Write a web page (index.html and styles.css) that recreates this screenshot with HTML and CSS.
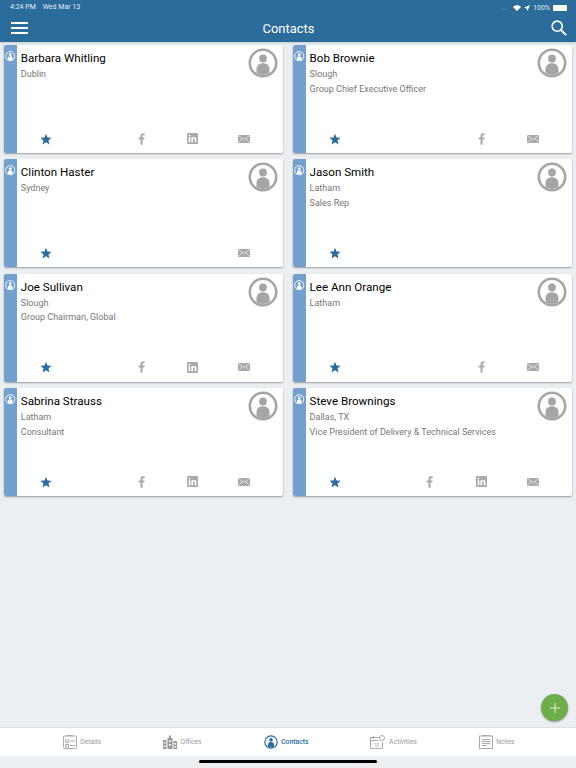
FILE: index.html
```html
<!DOCTYPE html>
<html lang="en">

<head>
    <meta charset="UTF-8">
    <meta name="viewport" content="width=device-width, initial-scale=1.0">
    <title>Contacts</title>
    <link rel="stylesheet" href="styles.css">
</head>

<body>
    <svg class="defs" width="0" height="0">
        <symbol id="person" viewBox="0 0 30 30">
            <circle cx="15" cy="15" r="13.2" fill="none" stroke="currentColor" stroke-width="2.6" />
            <circle cx="15" cy="10.500" r="3.900" fill="currentColor" />
            <path d="M8.500 25v-4c0-3.600 2.600-5.800 6.500-5.800s6.500 2.200 6.500 5.800v4c-2 1.300-4.200 2-6.500 2s-4.500-.7-6.500-2z" fill="currentColor" />
        </symbol>
        <symbol id="star" viewBox="0 0 24 24">
            <path d="M12 1.500l3 7.600 8.200.5-6.300 5.200 2.100 8-7-4.400-7 4.400 2.100-8L.8 9.600 9 9.100z" fill="currentColor" />
        </symbol>
        <symbol id="fb" viewBox="0 0 12 20">
            <path d="M7.800 20v-9h3l.5-3.500H7.800V5.400c0-1 .3-1.700 1.700-1.700h1.900V.5C11 .4 10 .3 8.900.3 6.200.3 4.300 2 4.300 5v2.500H1.200V11h3.100v9z" fill="currentColor" />
        </symbol>
        <symbol id="linkedin" viewBox="0 0 20 20">
            <path fill-rule="evenodd" d="M1.500 0h17c.8 0 1.500.7 1.500 1.500v17c0 .8-.7 1.500-1.500 1.500h-17C.7 20 0 19.300 0 18.500v-17C0 .7.700 0 1.500 0zM3 7.600V17h3V7.600zM4.500 3a1.700 1.700 0 1 0 0 3.400 1.700 1.700 0 0 0 0-3.400zM8 7.600V17h3v-5c0-1.400.6-2.200 1.700-2.200s1.400.8 1.400 2.200v5h3v-5.700c0-2.600-1.300-3.900-3.300-3.900-1.300 0-2.200.6-2.800 1.500V7.600z" fill="currentColor" />
        </symbol>
        <symbol id="mail" viewBox="0 0 24 16">
            <rect width="24" height="16" rx="1" fill="currentColor" />
            <path d="M1 1.500l11 7.500 11-7.500M1 14.500l7.500-7M23 14.500l-7.500-7" fill="none" stroke="#fff" stroke-width="1.200" />
        </symbol>
    </svg>

    <header class="topbar">
        <div class="statusbar">
            <span class="status-left"><span>4:24 PM</span><span>Wed Mar 13</span></span>
            <span class="status-right">
                <span class="dots">....</span>
                <svg width="8" height="6" viewBox="0 0 22 16">
                    <path d="M11 16L0 5c6-6.500 16-6.500 22 0z" fill="#fff" />
                </svg>
                <svg width="6" height="6" viewBox="0 0 16 16">
                    <path d="M16 0L0 7l7 2 2 7z" fill="#fff" />
                </svg>
                <span>100%</span>
                <span class="battery"></span>
            </span>
        </div>
        <div class="navbar">
            <div class="menu-btn"><span></span><span></span><span></span></div>
            <h1>Contacts</h1>
            <svg class="search-btn" width="16" height="16" viewBox="0 0 18 18">
                <circle cx="7" cy="7" r="5.700" fill="none" stroke="#fff" stroke-width="1.800" />
                <path d="M11.200 11.200L17 17" stroke="#fff" stroke-width="2.200" />
            </svg>
        </div>
    </header>

    <main class="contacts">
        <div class="card">
            <div class="strip"><svg class="strip-icon"><use href="#person" /></svg></div>
            <div class="card-body">
                <div class="name">Barbara Whitling</div>
                <div class="detail">Dublin</div>
                <svg class="avatar"><use href="#person" /></svg>
                <div class="actions">
                    <svg class="star"><use href="#star" /></svg>
                    <div class="slot"><svg class="ic-fb"><use href="#fb" /></svg></div>
                    <div class="slot"><svg class="ic-in"><use href="#linkedin" /></svg></div>
                    <div class="slot"><svg class="ic-mail"><use href="#mail" /></svg></div>
                </div>
            </div>
        </div>

        <div class="card">
            <div class="strip"><svg class="strip-icon"><use href="#person" /></svg></div>
            <div class="card-body">
                <div class="name">Bob Brownie</div>
                <div class="detail">Slough</div>
                <div class="detail">Group Chief Executive Officer</div>
                <svg class="avatar"><use href="#person" /></svg>
                <div class="actions">
                    <svg class="star"><use href="#star" /></svg>
                    <div class="slot"><svg class="ic-fb"><use href="#fb" /></svg></div>
                    <div class="slot"><svg class="ic-mail"><use href="#mail" /></svg></div>
                </div>
            </div>
        </div>

        <div class="card">
            <div class="strip"><svg class="strip-icon"><use href="#person" /></svg></div>
            <div class="card-body">
                <div class="name">Clinton Haster</div>
                <div class="detail">Sydney</div>
                <svg class="avatar"><use href="#person" /></svg>
                <div class="actions">
                    <svg class="star"><use href="#star" /></svg>
                    <div class="slot"><svg class="ic-mail"><use href="#mail" /></svg></div>
                </div>
            </div>
        </div>

        <div class="card">
            <div class="strip"><svg class="strip-icon"><use href="#person" /></svg></div>
            <div class="card-body">
                <div class="name">Jason Smith</div>
                <div class="detail">Latham</div>
                <div class="detail">Sales Rep</div>
                <svg class="avatar"><use href="#person" /></svg>
                <div class="actions">
                    <svg class="star"><use href="#star" /></svg>
                </div>
            </div>
        </div>

        <div class="card">
            <div class="strip"><svg class="strip-icon"><use href="#person" /></svg></div>
            <div class="card-body">
                <div class="name">Joe Sullivan</div>
                <div class="detail">Slough</div>
                <div class="detail">Group Chairman, Global</div>
                <svg class="avatar"><use href="#person" /></svg>
                <div class="actions">
                    <svg class="star"><use href="#star" /></svg>
                    <div class="slot"><svg class="ic-fb"><use href="#fb" /></svg></div>
                    <div class="slot"><svg class="ic-in"><use href="#linkedin" /></svg></div>
                    <div class="slot"><svg class="ic-mail"><use href="#mail" /></svg></div>
                </div>
            </div>
        </div>

        <div class="card">
            <div class="strip"><svg class="strip-icon"><use href="#person" /></svg></div>
            <div class="card-body">
                <div class="name">Lee Ann Orange</div>
                <div class="detail">Latham</div>
                <svg class="avatar"><use href="#person" /></svg>
                <div class="actions">
                    <svg class="star"><use href="#star" /></svg>
                    <div class="slot"><svg class="ic-fb"><use href="#fb" /></svg></div>
                    <div class="slot"><svg class="ic-mail"><use href="#mail" /></svg></div>
                </div>
            </div>
        </div>

        <div class="card">
            <div class="strip"><svg class="strip-icon"><use href="#person" /></svg></div>
            <div class="card-body">
                <div class="name">Sabrina Strauss</div>
                <div class="detail">Latham</div>
                <div class="detail">Consultant</div>
                <svg class="avatar"><use href="#person" /></svg>
                <div class="actions">
                    <svg class="star"><use href="#star" /></svg>
                    <div class="slot"><svg class="ic-fb"><use href="#fb" /></svg></div>
                    <div class="slot"><svg class="ic-in"><use href="#linkedin" /></svg></div>
                    <div class="slot"><svg class="ic-mail"><use href="#mail" /></svg></div>
                </div>
            </div>
        </div>

        <div class="card">
            <div class="strip"><svg class="strip-icon"><use href="#person" /></svg></div>
            <div class="card-body">
                <div class="name">Steve Brownings</div>
                <div class="detail">Dallas, TX</div>
                <div class="detail">Vice President of Delivery &amp; Technical Services</div>
                <svg class="avatar"><use href="#person" /></svg>
                <div class="actions">
                    <svg class="star"><use href="#star" /></svg>
                    <div class="slot"><svg class="ic-fb"><use href="#fb" /></svg></div>
                    <div class="slot"><svg class="ic-in"><use href="#linkedin" /></svg></div>
                    <div class="slot"><svg class="ic-mail"><use href="#mail" /></svg></div>
                </div>
            </div>
        </div>
    </main>

    <button class="fab">
        <svg width="10" height="10" viewBox="0 0 10 10">
            <path d="M5 0v10M0 5h10" stroke="#e6f2de" stroke-width="1" />
        </svg>
    </button>

    <nav class="tabbar">
        <div class="tab">
            <svg width="14" height="14" viewBox="0 0 14 14" fill="none" stroke="#aaa">
                <rect x=".5" y="1" width="13" height="12.500" rx="1" />
                <path d="M4 .5h6M2.500 5h3v2.500h-3zM2.500 9.500h3V12h-3zM7 6h5M7 10.500h5" />
            </svg>
            <span>Details</span>
        </div>
        <div class="tab">
            <svg width="14" height="14" viewBox="0 0 14 14" fill="#999">
                <path d="M0 5h3.500V14H0zM4.500 3H6V.500h2V3h1.500V14h-5zM10.500 6H14v8h-3.500z" />
                <path d="M1 7h1.500v1.500H1zM1 10.500h1.500V12H1zM6 5.500h2V7H6zM6 9h2v1.500H6zM11.500 8H13v1.500h-1.500zM11.500 11H13v1.500h-1.500z" fill="#fff" />
            </svg>
            <span>Offices</span>
        </div>
        <div class="tab active">
            <svg width="14" height="14" viewBox="0 0 30 30"><use href="#person" /></svg>
            <span>Contacts</span>
        </div>
        <div class="tab">
            <svg width="15" height="14" viewBox="0 0 15 14" fill="none" stroke="#aaa">
                <path d="M9 2.500H.5v11h12V7M.5 5.500h8M3.500 1v3" />
                <circle cx="12" cy="3" r="2.500" />
                <text x="3.500" y="11.500" class="cal-num">10</text>
            </svg>
            <span>Activities</span>
        </div>
        <div class="tab">
            <svg width="14" height="14" viewBox="0 0 14 14" fill="none" stroke="#aaa">
                <rect x=".5" y="1" width="13" height="12.500" />
                <path d="M3 .5h8M3 4.500h8M3 6.500h8M3 8.500h8M3 10.500h5" />
            </svg>
            <span>Notes</span>
        </div>
    </nav>

    <div class="home-area"><div class="home-bar"></div></div>
</body>

</html>
```

FILE: styles.css
```css
* {
    box-sizing: border-box;
}

html,
body {
    margin: 0;
    height: 768px;
    overflow: hidden;
}

body {
    display: flex;
    flex-direction: column;
    position: relative;
    background-color: #ebeff2;
    font-family: "Roboto", "Liberation Sans", sans-serif;
}

.defs {
    position: absolute;
}

.topbar {
    height: 42px;
    background-color: #2b6c9b;
    color: #fff;
    box-shadow: 0 1px 2px rgba(0, 0, 0, 0.15);
}

.statusbar {
    height: 14px;
    padding: 2px 9px 0 10px;
    display: flex;
    justify-content: space-between;
    font-size: 7px;
    line-height: 10px;
    color: #e4edf4;
}

.status-left {
    display: flex;
    gap: 7px;
}

.status-right {
    display: flex;
    align-items: center;
    gap: 3px;
}

.dots {
    opacity: 0.5;
    margin-right: 2px;
}

.battery {
    width: 14px;
    height: 6px;
    border-radius: 1px;
    background-color: #fff;
}

.navbar {
    height: 28px;
    padding: 0 9px 0 11px;
    display: flex;
    align-items: center;
    justify-content: space-between;
}

.navbar h1 {
    margin: 0 2px 0 0;
    font-size: 13px;
    font-weight: 400;
}

.menu-btn {
    width: 17px;
    display: flex;
    flex-direction: column;
    gap: 3px;
}

.menu-btn span {
    height: 2px;
    background-color: #fff;
}

.contacts {
    flex: 1;
    padding: 3px 4.400px 0 4px;
    display: grid;
    grid-template-columns: 1fr 1fr;
    grid-auto-rows: 108px;
    column-gap: 10px;
    row-gap: 6.400px;
    align-content: start;
}

.card {
    display: flex;
    background-color: #fff;
    border-radius: 2px;
    box-shadow: 0 1px 2px rgba(0, 0, 0, 0.35);
}

.strip {
    width: 13.300px;
    padding-top: 6px;
    display: flex;
    justify-content: center;
    align-items: flex-start;
    background-color: #74a0cd;
    border-radius: 2px 0 0 2px;
}

.strip-icon {
    width: 10.500px;
    height: 10.500px;
    color: #fff;
}

.card-body {
    flex: 1;
    position: relative;
    padding: 5px 3.500px 0;
    display: flex;
    flex-direction: column;
}

.name {
    font-size: 11.600px;
    line-height: 16px;
    color: #000;
    margin-bottom: 1px;
}

.detail {
    font-size: 9px;
    line-height: 14.500px;
    color: #777;
}

.avatar {
    position: absolute;
    top: 3px;
    right: 5px;
    width: 30px;
    height: 30px;
    color: #a5a5a5;
}

.actions {
    position: absolute;
    left: 0;
    right: 0;
    bottom: 6.500px;
    height: 16px;
    display: flex;
    align-items: center;
    justify-content: flex-end;
    padding-right: 13px;
}

.star {
    width: 12px;
    height: 12px;
    color: #2b6c9b;
    margin-left: 23px;
    margin-right: auto;
}

.slot {
    width: 51.500px;
    height: 16px;
    display: flex;
    align-items: center;
    justify-content: center;
}

.ic-fb {
    width: 7px;
    height: 12px;
    color: #aaa;
}

.ic-in {
    width: 11px;
    height: 11px;
    color: #aaa;
}

.ic-mail {
    width: 12px;
    height: 8px;
    color: #aaa;
}

.fab {
    position: absolute;
    top: 694px;
    right: 8px;
    width: 27px;
    height: 27px;
    padding: 0;
    border: none;
    border-radius: 50%;
    display: flex;
    align-items: center;
    justify-content: center;
    background-color: #6eae4a;
    box-shadow: 0 1px 2px rgba(0, 0, 0, 0.4);
}

.tabbar {
    height: 29px;
    display: flex;
    align-items: center;
    justify-content: center;
    gap: 62px;
    padding-left: 1px;
    background-color: #fff;
    border-top: 1.500px solid #dfe1e3;
}

.tab {
    display: flex;
    align-items: center;
    gap: 3.500px;
    font-size: 6.800px;
    color: #999;
}

.tab.active {
    color: #2b6c9b;
    font-weight: 500;
}

.cal-num {
    font-size: 5px;
    fill: #999;
    stroke: none;
}

.home-area {
    height: 12px;
    padding-top: 3.500px;
    display: flex;
    justify-content: center;
}

.home-bar {
    width: 178px;
    height: 3px;
    border-radius: 2px;
    background-color: #000;
}
```
